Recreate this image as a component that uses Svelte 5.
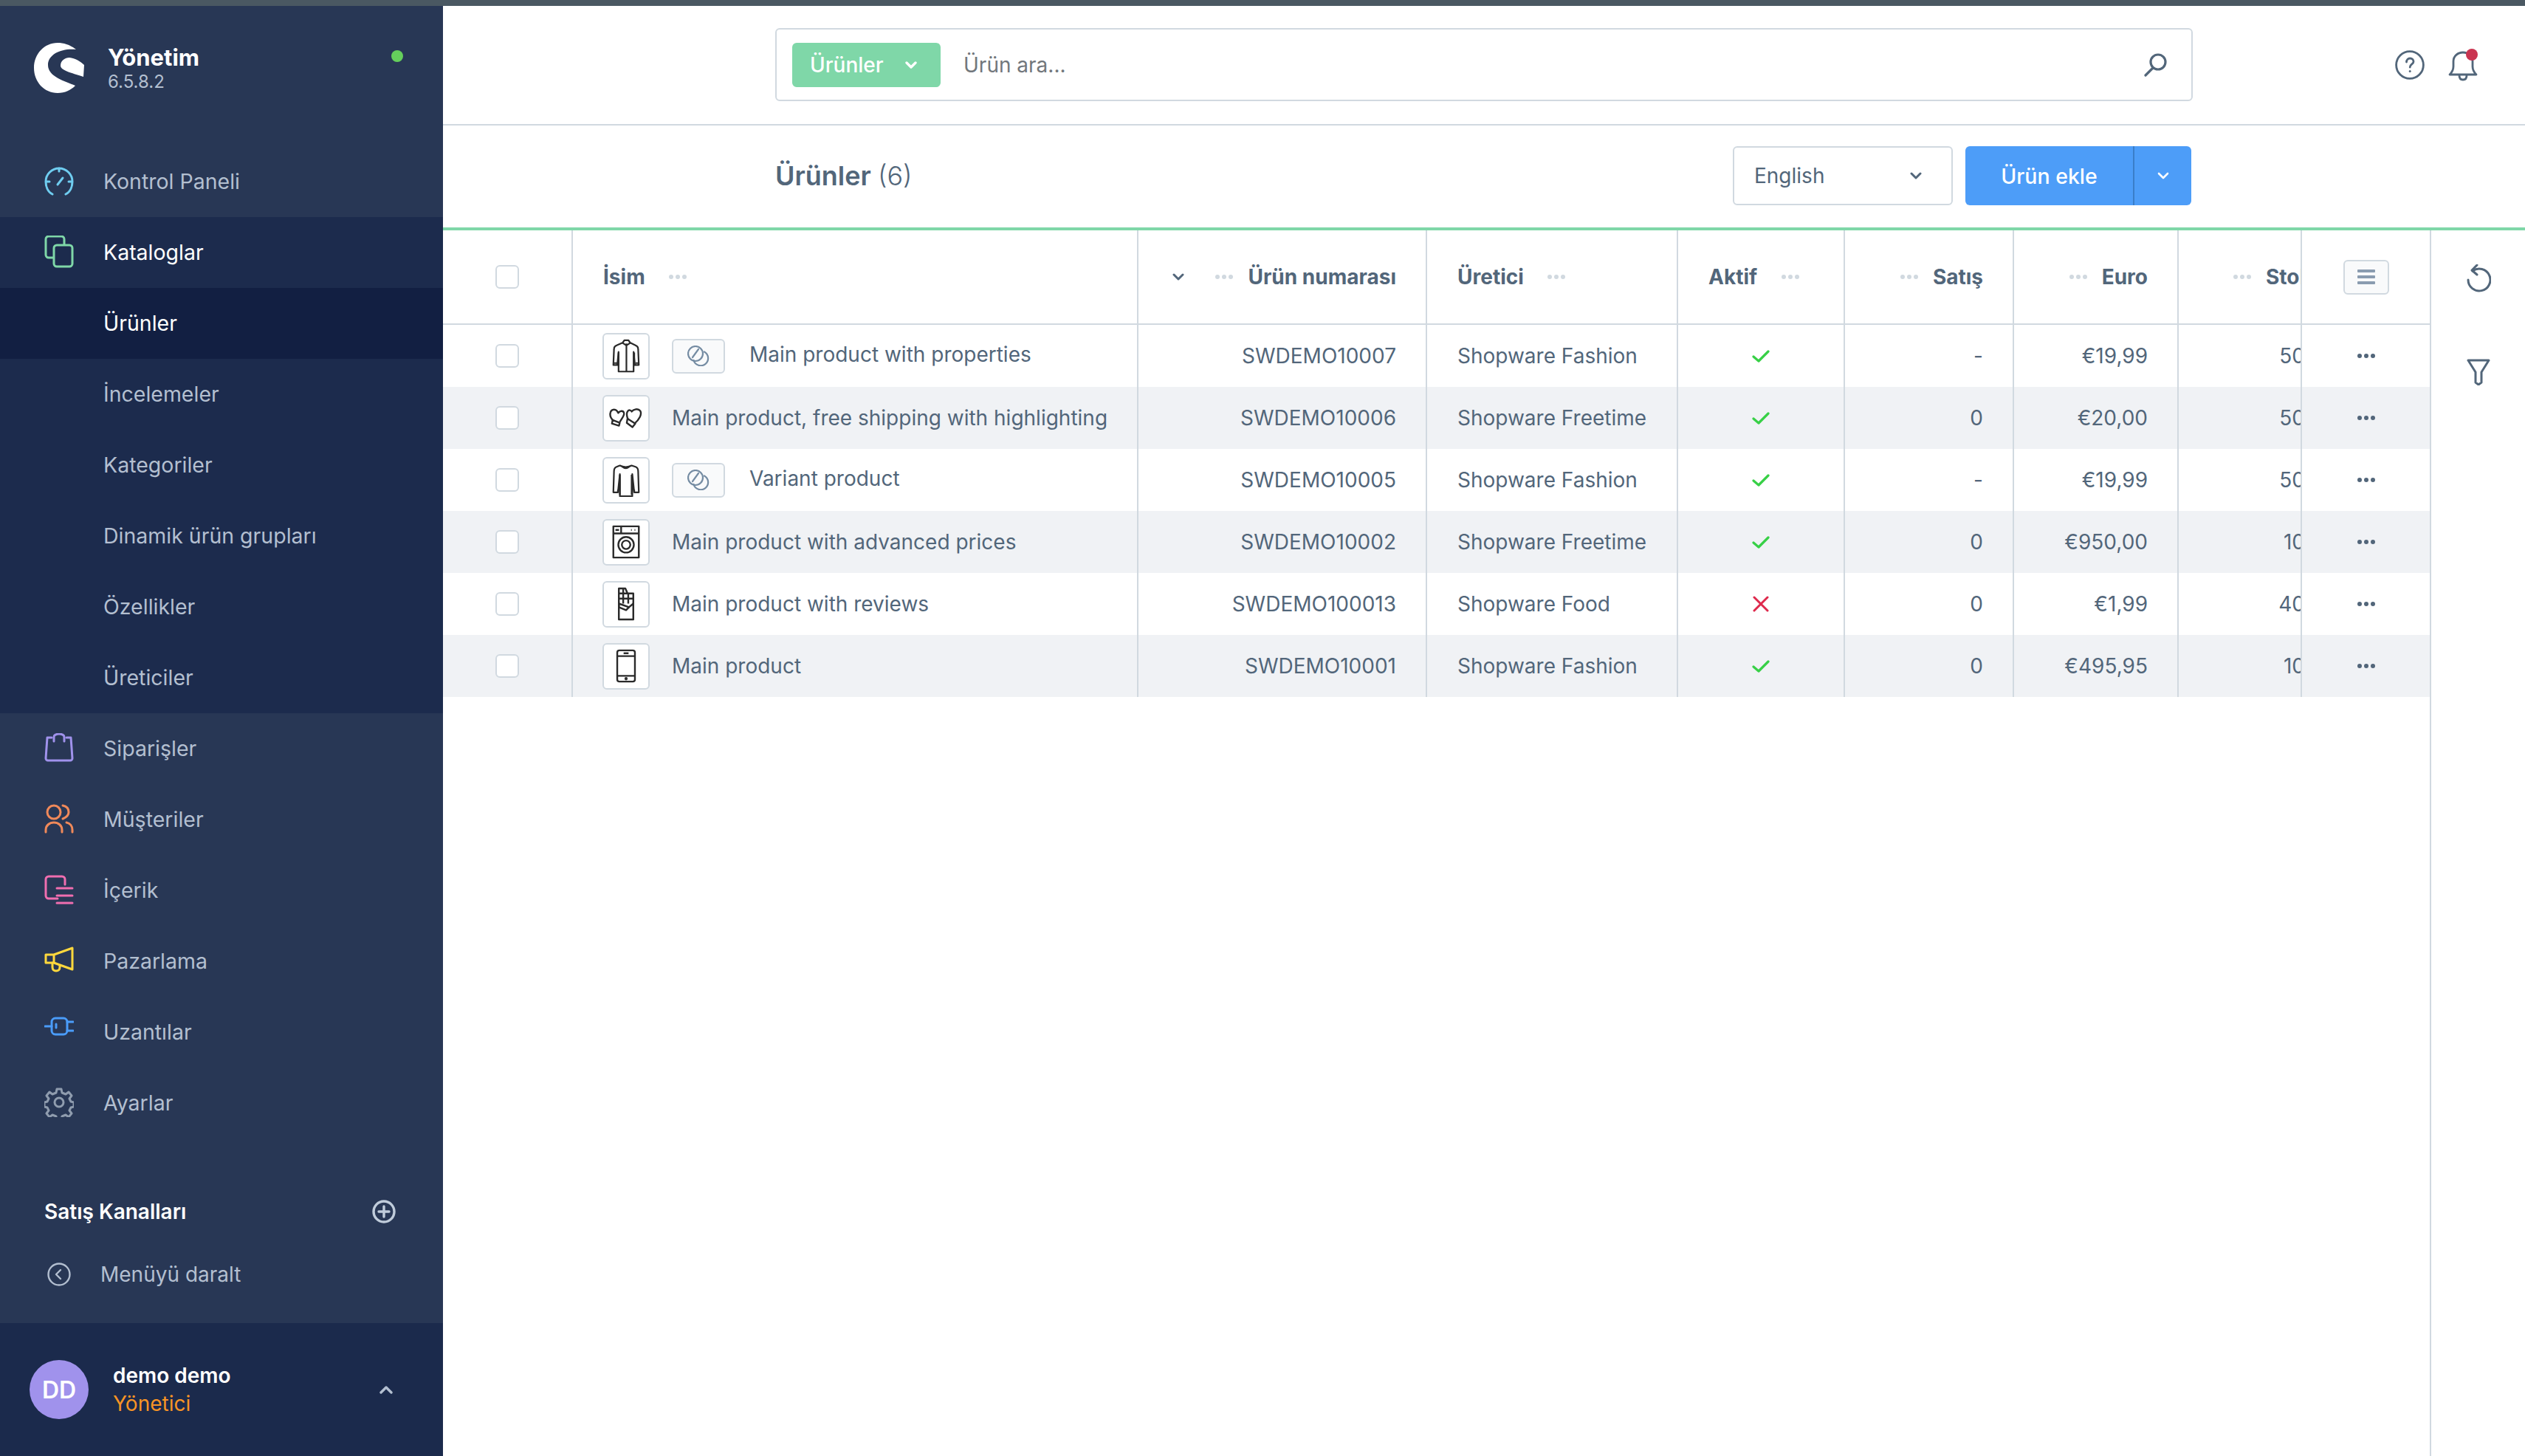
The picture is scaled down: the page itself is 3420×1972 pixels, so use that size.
<script>
  const icons = {
    dashboard: '<path d="M11 38C5 35 2 28 2 21a18 18 0 0 1 36 0c0 7-3 14-9 17" stroke="#6fcdf0"/><path d="M18 25l7-9M20 3v4M3 21h4M33 21h4" stroke="#6fcdf0"/>',
    catalog: '<rect x="2" y="1" width="25" height="29" rx="4" stroke="#7fd7a8"/><rect x="13" y="13" width="25" height="29" rx="4" fill="#1c2b4d" stroke="#7fd7a8"/>',
    orders: '<path d="M4 6h6M30 6h6M4 6L2 34a3 3 0 0 0 3 3h30a3 3 0 0 0 3-3L36 6" stroke="#a092ec"/><path d="M13 11V5a7 4 0 0 1 14 0v6" stroke="#a092ec"/>',
    customers: '<circle cx="13" cy="11" r="9" stroke="#f0895a"/><path d="M25 2c6 1 8 5 8 9s-3 7-8 9M2 38v-3c0-6 5-10 11-10s11 4 11 10v3M30 25c5 1 8 5 8 10v3" stroke="#f0895a"/>',
    content: '<path d="M28 13V6a4 4 0 0 0-4-4H6a4 4 0 0 0-4 4v22a4 4 0 0 0 4 4h12" stroke="#f06eb0"/><path d="M17 18h21M17 28h21M17 38h21" stroke="#f06eb0"/>',
    marketing: '<path d="M2 12h11v11H2zM13 12L38 3v29L13 23" stroke="#ffd83d"/><path d="M11 23v6c0 3 2 5 5 5s5-2 5-5v-2" stroke="#ffd83d"/>',
    extensions: '<rect x="10" y="2" width="21" height="22" rx="5" stroke="#4a9cf9"/><path d="M1 13h9M31 7h8M31 19h8M16 10v5" stroke="#4a9cf9"/>',
    settings: '<circle cx="20" cy="20" r="6" stroke="#8f9cae"/><path d="M17 2h6l1 5 5 2 4-3 4 5-3 4 2 4 4 1v6l-4 1-2 4 3 4-4 5-4-3-5 2-1 5h-6l-1-5-5-2-4 3-4-5 3-4-2-4-4-1v-6l4-1 2-4-3-4 4-5 4 3 5-2z" stroke="#8f9cae"/>'
  };

  const subItems = ['Ürünler', 'İncelemeler', 'Kategoriler', 'Dinamik ürün grupları', 'Özellikler', 'Üreticiler'];
  const navAfter = [
    ['Siparişler', 'orders'],
    ['Müşteriler', 'customers'],
    ['İçerik', 'content'],
    ['Pazarlama', 'marketing'],
    ['Uzantılar', 'extensions'],
    ['Ayarlar', 'settings']
  ];

  const thumbs = {
    jacket: { box: '-1 -1 41 52', body: '<path d="M14 5l3-4h6l3 4 8 4c3 1 4 3 4 6l1 24h-6l-2-20v30H8V19L6 39H0l1-24c0-3 1-5 4-6z"/><path d="M20 6v43M14 5l6 4 6-4M6 36H1M34 36h5M8 20v20M32 20v20" />' },
    gloves: { box: '-1 -2 48 30', body: '<path d="M5 17C1 13 0 8 1 5c1-4 6-5 9-2l2 3c2-3 7-4 8 0 1 3-3 8-6 13"/><path d="M4 16l10 4-1 4-10-3z"/><path d="M26 16c-2-5-3-9-1-12 2-3 5-2 6 0 2-3 9-5 12-1 3 5-2 13-8 18"/><path d="M25 14l11 7-4 5-8-6z"/>' },
    sweater: { box: '-1 -1 41 52', body: '<path d="M10 3c5 3 13 3 18 0l6 2c3 1 4 4 4 7l1 32h-7l-3-28v34H10V16L7 44H0l1-32c0-3 1-6 4-7z"/><path d="M13 4c3 4 9 4 12 0M7 40v4M32 40v4M10 17v31M28 17v31"/>' },
    washer: { box: '-1 -1 40 48', body: '<rect x="1" y="1" width="36" height="44"/><path d="M1 11h36M12 1v10M4 6h5M26 6h1M31 6h1" /><circle cx="19" cy="27" r="11"/><circle cx="19" cy="27" r="6"/>' },
    choc: { box: '-1 -1 24 47', body: '<path d="M1 22V1h9l3 7h8v14M1 8h20M1 15h20M7 1v21M14 8v14"/><path d="M1 22l14 5 6-5v22H1z"/><path d="M1 22v5l10 4 4-4"/>' },
    phone: { box: '-1 -1 29 48', body: '<rect x="1" y="1" width="25" height="44" rx="3"/><path d="M1 9h25M1 37h25M10 5h7"/><circle cx="13.5" cy="41" r="1"/>' }
  };

  const rows = [
    { thumb: 'jacket', variant: true, name: 'Main product with properties', sku: 'SWDEMO10007', maker: 'Shopware Fashion', active: true, sales: '-', price: '€19,99', stock: '50' },
    { thumb: 'gloves', variant: false, name: 'Main product, free shipping with highlighting', sku: 'SWDEMO10006', maker: 'Shopware Freetime', active: true, sales: '0', price: '€20,00', stock: '50' },
    { thumb: 'sweater', variant: true, name: 'Variant product', sku: 'SWDEMO10005', maker: 'Shopware Fashion', active: true, sales: '-', price: '€19,99', stock: '50' },
    { thumb: 'washer', variant: false, name: 'Main product with advanced prices', sku: 'SWDEMO10002', maker: 'Shopware Freetime', active: true, sales: '0', price: '€950,00', stock: '10' },
    { thumb: 'choc', variant: false, name: 'Main product with reviews', sku: 'SWDEMO100013', maker: 'Shopware Food', active: false, sales: '0', price: '€1,99', stock: '40' },
    { thumb: 'phone', variant: false, name: 'Main product', sku: 'SWDEMO10001', maker: 'Shopware Fashion', active: true, sales: '0', price: '€495,95', stock: '10' }
  ];
</script>

{#snippet dots(color)}
  <svg class="dots" width="24" height="6" viewBox="0 0 24 6" fill={color}>
    <circle cx="3" cy="3" r="3" /><circle cx="12" cy="3" r="3" /><circle cx="21" cy="3" r="3" />
  </svg>
{/snippet}

<div class="page">
  <div class="topline"></div>
  <div class="body">
    <aside class="sidebar">
      <div class="brand">
        <svg class="logo" width="68" height="68" viewBox="0 0 68 68" fill="#fff">
          <path d="M57 9C48 2 40 0 32 0 14 0 0 15 0 34s14 34 32 34c10 0 18-4 24-10C42 52 19 46 19 30 19 15 38 7 57 9Z" />
          <path d="M36 31c0-7 6-11 12-11 8 1 15 5 20 10l-1 16C56 42 36 38 36 31Z" />
        </svg>
        <div class="brand-text">
          <div class="brand-name">Yönetim</div>
          <div class="brand-version">6.5.8.2</div>
        </div>
        <span class="status"></span>
      </div>

      <nav>
        <div class="nav-item">
          <svg class="nav-icon" width="40" height="40" viewBox="0 0 40 40" fill="none" stroke-width="3" stroke-linecap="round" stroke-linejoin="round">{@html icons.dashboard}</svg>
          <span>Kontrol Paneli</span>
        </div>
        <div class="nav-item open">
          <svg class="nav-icon" width="40" height="44" viewBox="0 0 40 44" fill="none" stroke-width="3" stroke-linecap="round" stroke-linejoin="round">{@html icons.catalog}</svg>
          <span>Kataloglar</span>
        </div>
        <div class="sub-list">
          {#each subItems as item, i}
            <div class="sub-item" class:current={i === 0}>{item}</div>
          {/each}
        </div>
        {#each navAfter as [label, icon]}
          <div class="nav-item">
            <svg class="nav-icon" width="40" height="40" viewBox="0 0 40 40" fill="none" stroke-width="3" stroke-linecap="round" stroke-linejoin="round">{@html icons[icon]}</svg>
            <span>{label}</span>
          </div>
        {/each}
      </nav>

      <div class="channels">
        <span>Satış Kanalları</span>
        <svg width="32" height="32" viewBox="0 0 32 32" fill="none" stroke="#c0ccdb" stroke-width="3.4" stroke-linecap="round">
          <circle cx="16" cy="16" r="14" /><path d="M16 9v14M9 16h14" />
        </svg>
      </div>
      <div class="collapse">
        <svg width="32" height="32" viewBox="0 0 32 32" fill="none" stroke="#b3bfd0" stroke-width="2.4" stroke-linecap="round" stroke-linejoin="round">
          <circle cx="16" cy="16" r="14.5" /><path d="M18 10l-6 6 6 6" />
        </svg>
        <span>Menüyü daralt</span>
      </div>

      <div class="user">
        <div class="avatar">DD</div>
        <div class="user-text">
          <div class="user-name">demo demo</div>
          <div class="user-role">Yönetici</div>
        </div>
        <svg class="user-toggle" width="18" height="12" viewBox="0 0 18 12" fill="none" stroke="#b3bfd0" stroke-width="3.4" stroke-linecap="round" stroke-linejoin="round">
          <path d="M2 10l7-7 7 7" />
        </svg>
      </div>
    </aside>

    <main>
      <header class="searchbar">
        <div class="search">
          <div class="search-type">
            <span>Ürünler</span>
            <svg width="16" height="12" viewBox="0 0 16 12" fill="none" stroke="#fff" stroke-width="3.4" stroke-linecap="round" stroke-linejoin="round"><path d="M2 3l6 6 6-6" /></svg>
          </div>
          <span class="search-hint">Ürün ara...</span>
          <svg class="search-icon" width="32" height="32" viewBox="0 0 32 32" fill="none" stroke="#52667a" stroke-width="3.2" stroke-linecap="round">
            <circle cx="19" cy="12" r="10" /><path d="M12 20L2 30" />
          </svg>
        </div>
        <div class="top-actions">
          <svg width="40" height="40" viewBox="0 0 40 40" fill="none" stroke="#52667a" stroke-width="2.8">
            <circle cx="20" cy="20" r="18.4" />
            <path d="M15.5 16c0-3 2-5 4.800-5s4.700 2 4.700 4.500c0 3.500-4.800 3.500-4.800 7.500" stroke-linecap="round" />
            <circle cx="20.200" cy="28.500" r="1.500" fill="#52667a" stroke="none" />
          </svg>
          <div class="bell">
            <svg width="40" height="42" viewBox="0 0 40 42" fill="none" stroke="#52667a" stroke-width="2.800" stroke-linejoin="round">
              <path d="M2 33c3-3 5-6 5-11v-7C7 8 13 3 20 3s13 5 13 12v7c0 5 2 8 5 11z" />
              <path d="M15 34c0 4 2 6 5 6s5-2 5-6" />
            </svg>
            <span class="bell-dot"></span>
          </div>
        </div>
      </header>

      <div class="smartbar">
        <h1>Ürünler <span>(6)</span></h1>
        <div class="smartbar-actions">
          <div class="lang">
            <span>English</span>
            <svg width="16" height="12" viewBox="0 0 16 12" fill="none" stroke="#52667a" stroke-width="3" stroke-linecap="round" stroke-linejoin="round"><path d="M2 3l6 6 6-6" /></svg>
          </div>
          <div class="add">
            <span class="add-label">Ürün ekle</span>
            <span class="add-more">
              <svg width="16" height="12" viewBox="0 0 16 12" fill="none" stroke="#fff" stroke-width="2.600" stroke-linecap="round" stroke-linejoin="round"><path d="M2 3l6 6 6-6" /></svg>
            </span>
          </div>
        </div>
      </div>

      <div class="content">
        <div class="table">
          <div class="grid head">
            <div class="cell center"><span class="check"></span></div>
            <div class="cell name-head"><b>İsim</b>{@render dots('#d1d9e0')}</div>
            <div class="cell right sku-head">
              <svg class="sort" width="16" height="12" viewBox="0 0 16 12" fill="none" stroke="#52667a" stroke-width="3" stroke-linecap="round" stroke-linejoin="round"><path d="M2 3l6 6 6-6" /></svg>
              {@render dots('#d1d9e0')}<b>Ürün numarası</b>
            </div>
            <div class="cell maker-head"><b>Üretici</b>{@render dots('#d1d9e0')}</div>
            <div class="cell active-head"><b>Aktif</b>{@render dots('#d1d9e0')}</div>
            <div class="cell right">{@render dots('#d1d9e0')}<b>Satış</b></div>
            <div class="cell right">{@render dots('#d1d9e0')}<b>Euro</b></div>
            <div class="cell stock stock-head">{@render dots('#d1d9e0')}<b>Stok</b></div>
            <div class="cell center">
              <div class="col-settings">
                <svg width="24" height="20" viewBox="0 0 24 20" fill="#8a9cb0"><rect width="24" height="4" rx="1" /><rect y="8" width="24" height="4" rx="1" /><rect y="16" width="24" height="4" rx="1" /></svg>
              </div>
            </div>
          </div>

          {#each rows as row, i}
            <div class="grid row" class:striped={i % 2 === 1}>
              <div class="cell center"><span class="check"></span></div>
              <div class="cell name">
                <div class="thumb">
                  <svg width="46" height="46" viewBox={thumbs[row.thumb].box} fill="none" stroke="#2a2a2a" stroke-width="2.500" stroke-linejoin="round">{@html thumbs[row.thumb].body}</svg>
                </div>
                {#if row.variant}
                  <div class="variant">
                    <svg width="30" height="28" viewBox="0 0 30 28" fill="none" stroke="#758ca3" stroke-width="2.200" stroke-linecap="round">
                      <circle cx="11" cy="11" r="10" /><path d="M23 8.500A10 10 0 1 1 8.500 20" /><path d="M7 16l8-11" />
                    </svg>
                  </div>
                {/if}
                <span class="name-text">{row.name}</span>
              </div>
              <div class="cell right">{row.sku}</div>
              <div class="cell left-pad">{row.maker}</div>
              <div class="cell center">
                {#if row.active}
                  <svg width="24" height="18" viewBox="0 0 24 18" fill="none" stroke="#37d046" stroke-width="3.200" stroke-linecap="round" stroke-linejoin="round"><path d="M2 10l7 6L22 3" /></svg>
                {:else}
                  <svg width="22" height="22" viewBox="0 0 22 22" fill="none" stroke="#de294c" stroke-width="3" stroke-linecap="round"><path d="M2 2l18 18M20 2L2 20" /></svg>
                {/if}
              </div>
              <div class="cell right">{row.sales}</div>
              <div class="cell right">{row.price}</div>
              <div class="cell stock"><span>{row.stock}</span></div>
              <div class="cell center">{@render dots('#52667a')}</div>
            </div>
          {/each}
        </div>

        <div class="rail">
          <svg width="34" height="38" viewBox="0 0 34 38" fill="none" stroke="#52667a" stroke-width="3" stroke-linecap="round" stroke-linejoin="round">
            <path d="M8 11a15 15 0 1 1-6 12" transform="translate(1 -2)" /><path d="M15 1L8 8l7 6" />
          </svg>
          <svg width="32" height="36" viewBox="0 0 32 36" fill="none" stroke="#52667a" stroke-width="3" stroke-linejoin="round">
            <path d="M2 2h28L20 18v14l-4 3-4-3V18z" />
          </svg>
        </div>
      </div>
    </main>
  </div>
</div>

<style>
  :global(body) {
    margin: 0;
    background: #fff;
  }

  .page {
    width: 3420px;
    height: 1972px;
    overflow: hidden;
    display: flex;
    flex-direction: column;
    font-family: Inter, "Noto Sans", sans-serif;
    font-size: 28px;
    color: #52667a;
  }

  .topline {
    height: 8px;
    flex: none;
    background: #4a5862;
  }

  .body {
    flex: 1;
    display: flex;
    min-height: 0;
  }

  .sidebar {
    width: 600px;
    flex: none;
    display: flex;
    flex-direction: column;
    background: #283755;
    color: #b3bfd0;
  }

  .brand {
    height: 190px;
    flex: none;
    box-sizing: border-box;
    padding: 50px 54px 0 46px;
    display: flex;
    align-items: flex-start;
  }

  .brand-text {
    margin-left: 32px;
    padding-top: 2px;
  }

  .brand-name {
    font-size: 31px;
    font-weight: 700;
    line-height: 36px;
    color: #fff;
  }

  .brand-version {
    font-size: 24px;
    line-height: 30px;
  }

  .status {
    width: 16px;
    height: 16px;
    margin: 10px 0 0 auto;
    border-radius: 50%;
    background: #65cf5c;
  }

  .nav-item,
  .sub-item {
    height: 96px;
    display: flex;
    align-items: center;
    font-size: 28.5px;
  }

  .nav-item {
    padding-left: 60px;
  }

  .nav-item span {
    margin-bottom: 2px;
  }

  .nav-icon {
    flex: none;
    margin: 0 40px 3px 0;
  }

  .nav-item.open {
    background: #1c2b4d;
    color: #fff;
  }

  .sub-list {
    background: #1c2b4d;
  }

  .sub-item {
    box-sizing: border-box;
    padding: 0 0 2px 140px;
  }

  .sub-item.current {
    background: #121f42;
    color: #fff;
  }

  .channels {
    margin-top: 74px;
    height: 50px;
    padding: 0 64px 0 60px;
    display: flex;
    align-items: center;
    justify-content: space-between;
    font-weight: 600;
    color: #fff;
  }

  .collapse {
    margin-top: 40px;
    height: 40px;
    padding-left: 64px;
    display: flex;
    align-items: center;
    gap: 40px;
  }

  .user {
    margin-top: auto;
    height: 180px;
    flex: none;
    box-sizing: border-box;
    padding: 0 68px 0 40px;
    display: flex;
    align-items: center;
    background: #1b2a4c;
  }

  .avatar {
    width: 80px;
    height: 80px;
    border-radius: 50%;
    display: flex;
    align-items: center;
    justify-content: center;
    background: #a092ec;
    color: #fff;
    font-size: 32px;
    font-weight: 600;
  }

  .user-text {
    margin-left: 33px;
  }

  .user-name {
    font-weight: 600;
    line-height: 38px;
    color: #fff;
  }

  .user-role {
    line-height: 38px;
    color: #f79425;
  }

  .user-toggle {
    margin-left: auto;
  }

  main {
    flex: 1;
    min-width: 0;
    display: flex;
    flex-direction: column;
  }

  .searchbar {
    height: 162px;
    flex: none;
    box-sizing: border-box;
    border-bottom: 2px solid #d1d9e0;
    padding: 30px 0 0 450px;
    display: flex;
    align-items: flex-start;
  }

  .search {
    width: 1920px;
    height: 99px;
    box-sizing: border-box;
    border: 2px solid #d1d9e0;
    border-radius: 6px;
    padding: 0 32px 0 21px;
    display: flex;
    align-items: center;
  }

  .search-type {
    width: 201px;
    height: 60px;
    box-sizing: border-box;
    padding: 0 32px 0 24px;
    border-radius: 6px;
    display: flex;
    align-items: center;
    justify-content: space-between;
    background: #7fd7a8;
    color: #fff;
    font-weight: 500;
  }

  .search-hint {
    margin-left: 31px;
    color: #72777c;
  }

  .search-icon {
    margin-left: auto;
  }

  .top-actions {
    margin-left: 274px;
    padding-top: 30px;
    display: flex;
    gap: 32px;
  }

  .bell {
    position: relative;
    height: 42px;
  }

  .bell-dot {
    position: absolute;
    top: -2px;
    right: 0;
    width: 16px;
    height: 16px;
    border-radius: 50%;
    background: #ca3450;
  }

  .smartbar {
    height: 138px;
    flex: none;
    box-sizing: border-box;
    padding: 0 452px 2px 450px;
    display: flex;
    align-items: center;
    justify-content: space-between;
  }

  h1 {
    margin: 0;
    font-size: 36px;
    font-weight: 600;
    line-height: 1;
  }

  h1 span {
    font-weight: 300;
  }

  .smartbar-actions {
    display: flex;
    gap: 17px;
  }

  .lang {
    width: 298px;
    height: 80px;
    box-sizing: border-box;
    border: 2px solid #d1d9e0;
    border-radius: 6px;
    padding: 0 40px 0 27px;
    display: flex;
    align-items: center;
    justify-content: space-between;
  }

  .add {
    width: 306px;
    height: 80px;
    border-radius: 6px;
    display: flex;
    background: #4d9df8;
    color: #fff;
    font-weight: 500;
    font-size: 28.5px;
  }

  .add-label {
    width: 227px;
    border-right: 2px solid #3a7ec9;
    display: flex;
    align-items: center;
    justify-content: center;
  }

  .add-more {
    flex: 1;
    display: flex;
    align-items: center;
    justify-content: center;
  }

  .content {
    flex: 1;
    display: flex;
    border-top: 4px solid #7fd7a8;
    min-height: 0;
  }

  .table {
    width: 2693px;
    flex: none;
    box-sizing: border-box;
    border-right: 2px solid #d1d9e0;
  }

  .grid {
    display: grid;
    grid-template-columns: 176px 766px 391px 340px 226px 229px 223px 167px 173px;
  }

  .head {
    height: 128px;
    box-sizing: border-box;
    border-bottom: 2px solid #d1d9e0;
  }

  .row {
    height: 84px;
  }

  .striped {
    background: #f0f2f5;
  }

  .cell {
    box-sizing: border-box;
    min-width: 0;
    overflow: hidden;
    display: flex;
    align-items: center;
    white-space: nowrap;
    border-right: 2px solid #d1d9e0;
  }

  .cell:last-child {
    border-right: 0;
  }

  .cell b {
    font-weight: 700;
  }

  .center {
    justify-content: center;
  }

  .right {
    justify-content: flex-end;
    padding-right: 40px;
    gap: 20px;
  }

  .left-pad,
  .maker-head {
    padding-left: 41px;
  }

  .name-head {
    padding-left: 41px;
    gap: 32px;
  }

  .maker-head {
    gap: 32px;
  }

  .active-head {
    padding-left: 41px;
    gap: 33px;
  }

  .sort {
    margin-right: 22px;
  }

  .stock {
    justify-content: flex-end;
  }

  .stock span {
    flex: none;
    margin-right: -6px;
  }

  .stock-head {
    justify-content: flex-start;
    padding-left: 74px;
    gap: 20px;
  }

  .dots {
    flex: none;
  }

  .check {
    width: 32px;
    height: 32px;
    box-sizing: border-box;
    border: 2px solid #d1d9e0;
    border-radius: 6px;
    background: #fff;
  }

  .name {
    padding-left: 40px;
  }

  .thumb {
    width: 64px;
    height: 63px;
    flex: none;
    box-sizing: border-box;
    border: 2px solid #d1d9e0;
    border-radius: 6px;
    background: #fff;
    display: flex;
    align-items: center;
    justify-content: center;
  }

  .variant {
    width: 72px;
    height: 47px;
    flex: none;
    margin-left: 30px;
    box-sizing: border-box;
    border: 2px solid #d1d9e0;
    border-radius: 6px;
    background: #f9fafb;
    display: flex;
    align-items: center;
    justify-content: center;
  }

  .name-text {
    margin-left: 30px;
  }

  .variant + .name-text {
    margin-left: 33px;
    margin-bottom: 4px;
  }

  .col-settings {
    width: 62px;
    height: 47px;
    box-sizing: border-box;
    border: 2px solid #d1d9e0;
    border-radius: 6px;
    background: #f9fafb;
    display: flex;
    align-items: center;
    justify-content: center;
  }

  .rail {
    flex: 1;
    box-sizing: border-box;
    padding-top: 46px;
    display: flex;
    flex-direction: column;
    align-items: center;
    gap: 90px;
  }
</style>
